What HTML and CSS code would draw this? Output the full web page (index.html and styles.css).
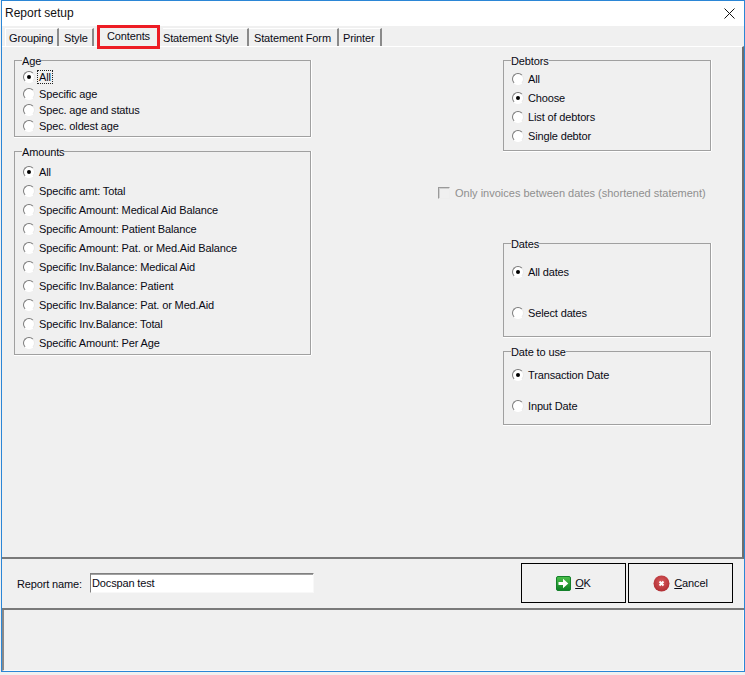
FILE: index.html
```html
<!DOCTYPE html>
<html lang="en">
<head>
<meta charset="utf-8">
<title>Report setup</title>
<link rel="stylesheet" href="styles.css">
</head>
<body>
<div class="window">
  <header class="titlebar">
    <span class="title">Report setup</span>
    <svg class="close" width="11" height="11" viewBox="0 0 11 11"><path d="M.5.5l10 10M10.500.5l-10 10" stroke="#111" stroke-width="1" fill="none"/></svg>
  </header>
  <nav class="tabs">
    <span class="tab t-grouping">Grouping</span>
    <span class="tab t-style">Style</span>
    <span class="tab active">Contents</span>
    <span class="tab t-sstyle">Statement Style</span>
    <span class="tab t-sform">Statement Form</span>
    <span class="tab t-printer">Printer</span>
  </nav>
  <main class="panel">
    <div class="col-left">
      <fieldset class="group age">
        <legend>Age</legend>
        <label class="opt"><span class="radio on"></span><span class="focus">All</span></label>
        <label class="opt"><span class="radio"></span>Specific age</label>
        <label class="opt"><span class="radio"></span>Spec. age and status</label>
        <label class="opt"><span class="radio"></span>Spec. oldest age</label>
      </fieldset>
      <fieldset class="group amounts">
        <legend>Amounts</legend>
        <label class="opt"><span class="radio on"></span>All</label>
        <label class="opt"><span class="radio"></span>Specific amt: Total</label>
        <label class="opt"><span class="radio"></span>Specific Amount: Medical Aid Balance</label>
        <label class="opt"><span class="radio"></span>Specific Amount: Patient Balance</label>
        <label class="opt"><span class="radio"></span>Specific Amount: Pat. or Med.Aid Balance</label>
        <label class="opt"><span class="radio"></span>Specific Inv.Balance: Medical Aid</label>
        <label class="opt"><span class="radio"></span>Specific Inv.Balance: Patient</label>
        <label class="opt"><span class="radio"></span>Specific Inv.Balance: Pat. or Med.Aid</label>
        <label class="opt"><span class="radio"></span>Specific Inv.Balance: Total</label>
        <label class="opt"><span class="radio"></span>Specific Amount: Per Age</label>
      </fieldset>
    </div>
    <div class="col-right">
      <fieldset class="group debtors">
        <legend>Debtors</legend>
        <label class="opt"><span class="radio"></span>All</label>
        <label class="opt"><span class="radio on"></span>Choose</label>
        <label class="opt"><span class="radio"></span>List of debtors</label>
        <label class="opt"><span class="radio"></span>Single debtor</label>
      </fieldset>
      <label class="check"><span class="box"></span>Only invoices between dates (shortened statement)</label>
      <fieldset class="group dates">
        <legend>Dates</legend>
        <label class="opt"><span class="radio on"></span>All dates</label>
        <label class="opt"><span class="radio"></span>Select dates</label>
      </fieldset>
      <fieldset class="group use">
        <legend>Date to use</legend>
        <label class="opt"><span class="radio on"></span>Transaction Date</label>
        <label class="opt"><span class="radio"></span>Input Date</label>
      </fieldset>
    </div>
  </main>
  <section class="footer">
    <span class="name-label">Report name:</span>
    <span class="name-input">Docspan test</span>
    <div class="buttons">
      <button class="btn" type="button">
        <svg width="15" height="15" viewBox="0 0 15 15"><defs><linearGradient id="g" x1="0" y1="0" x2="0" y2="1"><stop offset="0" stop-color="#4cc04a"/><stop offset="1" stop-color="#0c7f24"/></linearGradient></defs><rect x="0.5" y="0.5" width="14" height="14" rx="1.5" fill="url(#g)" stroke="#13802a"/><path d="M2.500 6h4.500V2.800L12.300 7.500 7 12.200V9H2.500z" fill="#fff"/></svg>
        <span><u>O</u>K</span>
      </button>
      <button class="btn" type="button">
        <svg width="17" height="17" viewBox="0 0 17 17"><defs><radialGradient id="r" cx="0.5" cy="0.4" r="0.6"><stop offset="0" stop-color="#d9595c"/><stop offset="1" stop-color="#b02e33"/></radialGradient></defs><circle cx="8.500" cy="8.500" r="8" fill="url(#r)"/><path d="M6.500 6.500l4 4M10.500 6.500l-4 4" stroke="#fff" stroke-width="2"/></svg>
        <span><u>C</u>ancel</span>
      </button>
    </div>
  </section>
  <section class="status"></section>
</div>
</body>
</html>
```
FILE: styles.css
```css
* { box-sizing: border-box; }
html, body { margin: 0; padding: 0; }
body {
  width: 745px;
  height: 675px;
  overflow: hidden;
  background: #f0f0f0;
  font-family: "Liberation Sans", "Noto Sans", sans-serif;
  font-size: 11px;
  letter-spacing: -0.14px;
  color: #0a0a14;
}
.window {
  width: 744px;
  height: 672px;
  margin-left: 1px;
  display: flex;
  flex-direction: column;
  border: 1px solid #2b86d6;
  background: #f0f0f0;
}
.titlebar {
  height: 25px;
  flex: none;
  background: #fff;
  display: flex;
  align-items: center;
  justify-content: space-between;
  padding: 0 9px 1px 3px;
}
.title { font-size: 12px; letter-spacing: 0; color: #111; }
.tabs {
  height: 20px;
  flex: none;
  display: flex;
  padding-left: 3px;
}
.tab {
  height: 18px;
  margin-top: 2px;
  display: flex;
  align-items: center;
  padding: 0 0 0 5px;
  border-top: 1px solid #fff;
  border-right: 2px solid #8a8a8a;
  white-space: nowrap;
}
.t-grouping { width: 54px; padding-left: 3px; border-left: 1px solid #fff; }
.t-style { width: 35px; }
.active {
  width: 63px;
  height: 24px;
  margin: -1px 3px -3px 3px;
  padding: 0 0 3px 7px;
  border: 3px solid #ed1c24;
  position: relative;
}
.t-sstyle { width: 86px; padding-left: 0; }
.t-sform { width: 90px; }
.t-printer { width: 43px; padding-left: 4px; }
.panel {
  height: 513px;
  flex: none;
  display: flex;
  justify-content: space-between;
  align-items: flex-start;
  border-top: 1px solid #fff;
  border-right: 2px solid #6e6e6e;
  border-bottom: 2px solid #7a7a7a;
  padding: 7px 31px 0 12px;
}
.col-left { width: 297px; display: flex; flex-direction: column; gap: 8px; }
.col-right { width: 273px; display: flex; flex-direction: column; align-items: flex-end; }
.group {
  margin: 0;
  padding: 0 0 0 8px;
  border: 1px solid #a0a0a0;
  box-shadow: 0 1px 0 #fff, 1px 0 0 #fff;
  display: flex;
  flex-direction: column;
  min-width: 0;
}
.group legend {
  padding: 0;
  margin-left: -1px;
  line-height: 14px;
  height: 12px;
}
.opt {
  display: flex;
  align-items: center;
  gap: 4px;
  white-space: nowrap;
}
.radio {
  width: 12px;
  height: 12px;
  flex: none;
  border-radius: 50%;
  background: #fff;
  border: 1px solid;
  border-color: #7a7a7a #e8e8e8 #fff #7a7a7a;
  display: flex;
  align-items: center;
  justify-content: center;
}
.radio.on::after {
  content: "";
  width: 4px;
  height: 4px;
  border-radius: 50%;
  background: #000;
}
.focus { outline: 1px dotted #222; padding: 0 1px; margin-left: -1px; }
.age { height: 83px; padding-top: 3px; }
.age .opt { height: 16.4px; }
.amounts { height: 210px; padding-top: 5px; }
.amounts .opt { height: 19px; }
.debtors { width: 208px; height: 97px; padding-top: 3px; }
.debtors .opt { height: 19px; }
.check {
  width: 100%;
  display: flex;
  align-items: center;
  gap: 5px;
  margin-top: 30px;
  height: 24px;
  letter-spacing: 0;
  color: #8f8f8f;
  white-space: nowrap;
}
.box {
  width: 12px;
  height: 12px;
  border: 1px solid #9a9a9a;
  border-right-color: #eee;
  border-bottom-color: #eee;
  box-shadow: inset 1px 1px 0 #d0d0d0;
}
.dates { width: 208px; height: 100px; margin-top: 32px; }
.dates .opt { height: 41px; padding-top: 1px; }
.dates .opt:first-of-type { margin-top: 2px; }
.use { width: 208px; height: 80px; margin-top: 8px; }
.use .opt { height: 31px; }
.use .opt:first-of-type { margin-top: 2px; }
.footer {
  height: 51px;
  flex: none;
  display: flex;
  align-items: center;
  padding: 0 11px 1px 15px;
  border-bottom: 2px solid #7a7a7a;
}
.name-label { width: 73px; margin-top: 1px; }
.name-input {
  width: 224px;
  height: 20px;
  background: #fff;
  border: 1px solid;
  border-color: #808080 #f8f8f8 #f8f8f8 #808080;
  box-shadow: inset 0 1px 0 #a0a0a0;
  padding: 0 1px;
  line-height: 18px;
}
.buttons { margin-left: auto; display: flex; gap: 2px; }
.btn {
  width: 105px;
  height: 40px;
  background: #f0f0f0;
  border: 1px solid #000;
  border-radius: 0;
  display: flex;
  align-items: center;
  justify-content: center;
  gap: 4px;
  font: inherit;
  letter-spacing: inherit;
  color: inherit;
  padding: 0;
}
.status {
  flex: 1;
  border-left: 2px solid #8a8a8a;
  border-right: 1px solid #fafafa;
  border-bottom: 1px solid #fafafa;
}
```
